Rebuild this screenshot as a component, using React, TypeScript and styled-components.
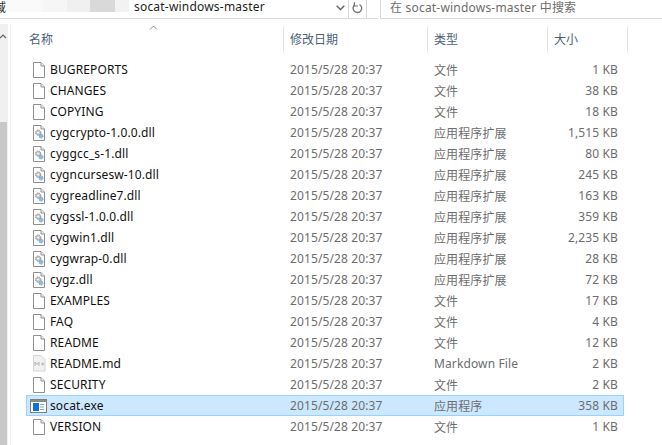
import styled, { createGlobalStyle } from 'styled-components'

const GlobalStyle = createGlobalStyle`
  html, body {
    margin: 0;
    background: #fff;
  }
  body {
    width: 662px;
    height: 445px;
    overflow: hidden;
    font-family: "Noto Sans", "Noto Sans CJK SC", sans-serif;
    font-size: 12px;
  }
`

const Window = styled.div`
  width: 662px;
  height: 445px;
  display: flex;
  flex-direction: column;
  overflow: hidden;
`

const TopBar = styled.div`
  height: 19px;
  flex: none;
  display: flex;
  align-items: stretch;
`

const PathBox = styled.div`
  width: 378px;
  box-sizing: border-box;
  padding-right: 11px;
  flex: none;
  display: flex;
  align-items: stretch;
  border-bottom: 1px solid #d9d9d9;
`

const ClippedChar = styled.div`
  width: 6px;
  flex: none;
  overflow: hidden;
  direction: rtl;
  color: #333;
  line-height: 15px;
`

const Smudge = styled.div<{ $w: number; $c: string }>`
  width: ${p => p.$w}px;
  flex: none;
  height: 12px;
  background: ${p => p.$c};
`

const PathText = styled.div`
  margin-left: 5px;
  flex: 1;
  color: #1e1e1e;
  line-height: 14px;
  letter-spacing: 0.2px;
`

const PathButton = styled.div<{ $w: number }>`
  width: ${p => p.$w}px;
  flex: none;
  display: flex;
  align-items: center;
  justify-content: center;
  margin-bottom: 2px;
`

const RefreshButton = styled(PathButton)`
  border-left: 1px solid #d9d9d9;
  border-right: 1px solid #d9d9d9;
  margin-bottom: 0;
  padding-bottom: 2px;
`

const SearchBox = styled.div`
  margin-left: 2px;
  flex: 1;
  border-left: 1px solid #d9d9d9;
  border-bottom: 1px solid #d9d9d9;
  padding-left: 9px;
  color: #6d6d6d;
  line-height: 15px;
  letter-spacing: 0.2px;
`

const Body = styled.div`
  flex: 1;
  display: flex;
  min-height: 0;
`

const SideBar = styled.div`
  width: 11px;
  box-sizing: border-box;
  flex: none;
  margin-top: 5px;
  border-right: 1px solid #f0f0f0;
`

const ScrollTrack = styled.div`
  width: 8px;
  height: 100%;
  display: flex;
  flex-direction: column;
  background: #f0f0f0;
`

const ScrollArrow = styled.div`
  height: 98px;
  flex: none;
  padding-top: 2px;
  box-sizing: border-box;
`

const ScrollThumb = styled.div`
  flex: 1;
  width: 7px;
  background: #c8c8c8;
`

const Main = styled.div`
  flex: 1;
  display: flex;
  flex-direction: column;
  min-width: 0;
`

const HeaderRow = styled.div`
  height: 27px;
  margin-top: 7px;
  margin-bottom: 6px;
  flex: none;
  display: flex;
  color: #4c607a;
`

const HeaderCell = styled.div<{ $w: number; $pad: number }>`
  position: relative;
  width: ${p => p.$w}px;
  flex: none;
  box-sizing: border-box;
  padding-left: ${p => p.$pad}px;
  border-right: 1px solid #e5e5e5;
  line-height: 27px;
`

const SortArrow = styled.svg`
  position: absolute;
  left: 138px;
  top: -1px;
`

const List = styled.div`
  margin-left: 15px;
  width: 598px;
  display: flex;
  flex-direction: column;
`

const Row = styled.div<{ $selected?: boolean }>`
  height: 21px;
  box-sizing: border-box;
  display: grid;
  grid-template-columns: 263px 144px 120px 64px;
  align-items: center;
  border: 1px solid ${p => (p.$selected ? '#99d1ff' : 'transparent')};
  background: ${p => (p.$selected ? '#cce8ff' : 'transparent')};
  color: #6d6d6d;
  letter-spacing: 0.12px;
`

const NameCell = styled.div`
  display: flex;
  align-items: center;
  color: #111;
  white-space: nowrap;
`

const IconSlot = styled.div`
  width: 23px;
  flex: none;
  display: flex;
  justify-content: center;
  align-items: center;
`

const Cell = styled.div`
  white-space: nowrap;
`

const SizeCell = styled(Cell)`
  text-align: right;
`

type Kind = 'file' | 'dll' | 'md' | 'exe'

const sheet = 'M1.5 .5H9L12.5 4V15.5H1.5Z'

const FileIcon = ({ kind }: { kind: Kind }) => {
  if (kind === 'exe') {
    return (
      <svg width="17" height="14" viewBox="0 0 17 14">
        <rect x=".5" y=".5" width="16" height="13" fill="#fff" stroke="#7d7d7d" />
        <rect x="1" y="1" width="15" height="2" fill="#8c8c8c" />
        <rect x="3" y="4" width="6" height="8" fill="#0a74d6" />
        <path d="M10 5.5h4M10 8h4M10 10.5h4" stroke="#8aa0b5" />
      </svg>
    )
  }
  if (kind === 'md') {
    return (
      <svg width="14" height="17" viewBox="0 0 14 17">
        <path d="M1.5 .5H9L13 4.5V16H1.5Z" fill="#f1f1f1" stroke="#d6d6d6" />
        <path d="M3 11V7L5 9.5 7 7V11M9 9h3.5M10.7 7.5v3" fill="none" stroke="#b3b3b3" />
      </svg>
    )
  }
  return (
    <svg width="14" height="16" viewBox="0 0 14 16">
      <path d={sheet} fill="#fff" stroke="#8f8f8f" />
      <path d="M9 .5V4H12.5" fill="#f2f2f2" stroke="#8f8f8f" />
      {kind === 'dll' && (
        <>
          <circle cx="6.2" cy="7.6" r="2.6" fill="#c8c8c8" stroke="#8d8d8d" strokeDasharray="1.4 .7" />
          <circle cx="6.2" cy="7.6" r=".9" fill="#fff" />
          <circle cx="9" cy="11" r="2" fill="#8fbce6" stroke="#6b9ccb" strokeDasharray="1.2 .6" />
        </>
      )}
    </svg>
  )
}

type FileEntry = {
  name: string
  kind: Kind
  type: string
  size: string
  selected?: boolean
}

const files: FileEntry[] = [
  { name: 'BUGREPORTS', kind: 'file', type: '文件', size: '1 KB' },
  { name: 'CHANGES', kind: 'file', type: '文件', size: '38 KB' },
  { name: 'COPYING', kind: 'file', type: '文件', size: '18 KB' },
  { name: 'cygcrypto-1.0.0.dll', kind: 'dll', type: '应用程序扩展', size: '1,515 KB' },
  { name: 'cyggcc_s-1.dll', kind: 'dll', type: '应用程序扩展', size: '80 KB' },
  { name: 'cygncursesw-10.dll', kind: 'dll', type: '应用程序扩展', size: '245 KB' },
  { name: 'cygreadline7.dll', kind: 'dll', type: '应用程序扩展', size: '163 KB' },
  { name: 'cygssl-1.0.0.dll', kind: 'dll', type: '应用程序扩展', size: '359 KB' },
  { name: 'cygwin1.dll', kind: 'dll', type: '应用程序扩展', size: '2,235 KB' },
  { name: 'cygwrap-0.dll', kind: 'dll', type: '应用程序扩展', size: '28 KB' },
  { name: 'cygz.dll', kind: 'dll', type: '应用程序扩展', size: '72 KB' },
  { name: 'EXAMPLES', kind: 'file', type: '文件', size: '17 KB' },
  { name: 'FAQ', kind: 'file', type: '文件', size: '4 KB' },
  { name: 'README', kind: 'file', type: '文件', size: '12 KB' },
  { name: 'README.md', kind: 'md', type: 'Markdown File', size: '2 KB' },
  { name: 'SECURITY', kind: 'file', type: '文件', size: '2 KB' },
  { name: 'socat.exe', kind: 'exe', type: '应用程序', size: '358 KB', selected: true },
  { name: 'VERSION', kind: 'file', type: '文件', size: '1 KB' },
]

export default function App() {
  return (
    <Window>
      <GlobalStyle />
      <TopBar>
        <PathBox>
          <ClippedChar>域</ClippedChar>
          <Smudge $w={37} $c="#fafafa" />
          <Smudge $w={24} $c="#f6f6f6" />
          <Smudge $w={23} $c="#f0f0f0" />
          <Smudge $w={25} $c="#d9d9d9" />
          <Smudge $w={14} $c="#f2f2f2" />
          <PathText>socat-windows-master</PathText>
          <PathButton $w={16}>
            <svg width="9" height="6" viewBox="0 0 9 6">
              <path d="M.7 .7 4.5 4.5 8.3 .7" fill="none" stroke="#666" strokeWidth="1.5" />
            </svg>
          </PathButton>
          <RefreshButton $w={17}>
            <svg width="11" height="12" viewBox="0 0 11 12">
              <path d="M7.5 2.5A4.3 4.3 0 1 1 2.8 2.8" fill="none" stroke="#777" strokeWidth="1.4" />
              <path d="M2.4 .3V4H6" fill="none" stroke="#777" strokeWidth="1.2" />
            </svg>
          </RefreshButton>
        </PathBox>
        <SearchBox>在 socat-windows-master 中搜索</SearchBox>
      </TopBar>
      <Body>
        <SideBar>
          <ScrollTrack>
            <ScrollArrow>
              <svg width="7" height="5" viewBox="0 0 7 5">
                <path d="M0 4 3 1 6 4" fill="none" stroke="#606060" strokeWidth="1.2" />
              </svg>
            </ScrollArrow>
            <ScrollThumb />
          </ScrollTrack>
        </SideBar>
        <Main>
          <HeaderRow>
            <HeaderCell $w={273} $pad={18}>
              名称
              <SortArrow width="9" height="5" viewBox="0 0 9 5">
                <path d="M1 4.5 4.5 1 8 4.5" fill="none" stroke="#8a8a8a" />
              </SortArrow>
            </HeaderCell>
            <HeaderCell $w={144} $pad={6}>修改日期</HeaderCell>
            <HeaderCell $w={120} $pad={6}>类型</HeaderCell>
            <HeaderCell $w={80} $pad={6}>大小</HeaderCell>
          </HeaderRow>
          <List>
            {files.map(f => (
              <Row key={f.name} $selected={f.selected}>
                <NameCell>
                  <IconSlot>
                    <FileIcon kind={f.kind} />
                  </IconSlot>
                  {f.name}
                </NameCell>
                <Cell>2015/5/28 20:37</Cell>
                <Cell>{f.type}</Cell>
                <SizeCell>{f.size}</SizeCell>
              </Row>
            ))}
          </List>
        </Main>
      </Body>
    </Window>
  )
}
